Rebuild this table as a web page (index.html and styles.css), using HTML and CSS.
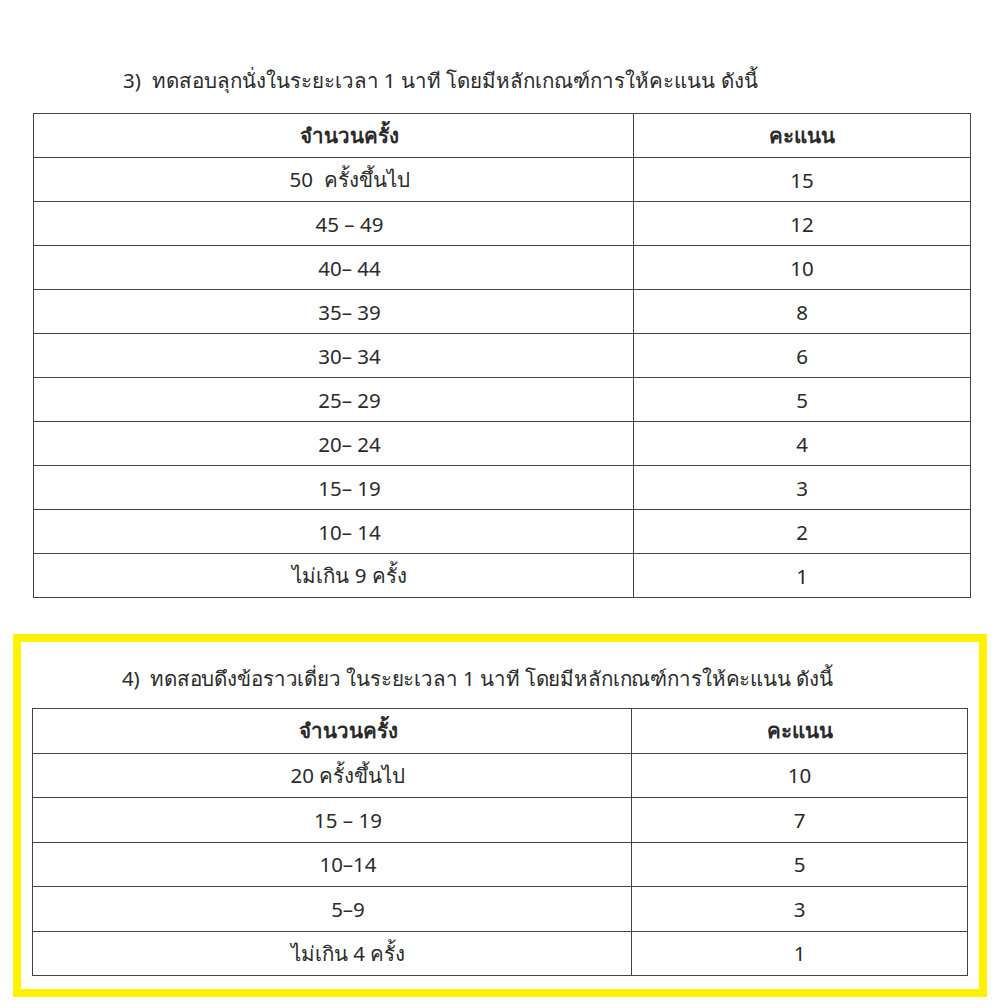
FILE: index.html
```html
<!DOCTYPE html>
<html lang="th">
<head>
<meta charset="utf-8">
<title>เกณฑ์การให้คะแนน</title>
<link rel="stylesheet" href="styles.css">
</head>
<body>
<div class="page">
  <section class="part part-plain">
    <p class="title">3)&nbsp; ทดสอบลุกนั่งในระยะเวลา 1 นาที โดยมีหลักเกณฑ์การให้คะแนน ดังนี้</p>
    <table class="score t1">
      <thead>
        <tr><th class="c-left">จำนวนครั้ง</th><th class="c-right">คะแนน</th></tr>
      </thead>
      <tbody>
        <tr><td class="c-left">50&nbsp; ครั้งขึ้นไป</td><td class="c-right">15</td></tr>
        <tr><td class="c-left">45 – 49</td><td class="c-right">12</td></tr>
        <tr><td class="c-left">40– 44</td><td class="c-right">10</td></tr>
        <tr><td class="c-left">35– 39</td><td class="c-right">8</td></tr>
        <tr><td class="c-left">30– 34</td><td class="c-right">6</td></tr>
        <tr><td class="c-left">25– 29</td><td class="c-right">5</td></tr>
        <tr><td class="c-left">20– 24</td><td class="c-right">4</td></tr>
        <tr><td class="c-left">15– 19</td><td class="c-right">3</td></tr>
        <tr><td class="c-left">10– 14</td><td class="c-right">2</td></tr>
        <tr><td class="c-left">ไม่เกิน 9 ครั้ง</td><td class="c-right">1</td></tr>
      </tbody>
    </table>
  </section>

  <section class="part part-highlight">
    <p class="title">4)&nbsp; ทดสอบดึงข้อราวเดี่ยว ในระยะเวลา 1 นาที โดยมีหลักเกณฑ์การให้คะแนน ดังนี้</p>
    <table class="score t2">
      <thead>
        <tr><th class="c-left">จำนวนครั้ง</th><th class="c-right">คะแนน</th></tr>
      </thead>
      <tbody>
        <tr><td class="c-left">20 ครั้งขึ้นไป</td><td class="c-right">10</td></tr>
        <tr><td class="c-left">15 – 19</td><td class="c-right">7</td></tr>
        <tr><td class="c-left">10–14</td><td class="c-right">5</td></tr>
        <tr><td class="c-left">5–9</td><td class="c-right">3</td></tr>
        <tr><td class="c-left">ไม่เกิน 4 ครั้ง</td><td class="c-right">1</td></tr>
      </tbody>
    </table>
  </section>
</div>
</body>
</html>
```

FILE: styles.css
```css
html, body {
  margin: 0;
  padding: 0;
  background: #ffffff;
}

body {
  font-family: "Noto Sans", "DejaVu Sans", sans-serif;
  color: #2a2a2a;
  font-size: 20.5px;
}

.page {
  width: 1000px;
  height: 1008px;
  overflow: hidden;
}

.title {
  margin: 0 0 0 90px;
  height: 30px;
  line-height: 30px;
  white-space: nowrap;
}

.part-plain {
  padding: 65px 29px 0 33px;
}

.part-plain .title {
  margin-bottom: 18px;
}

.part-highlight {
  box-sizing: border-box;
  margin: 36px 0 0 13px;
  width: 974px;
  border: 8px solid #fff200;
  padding: 21px 11px 13px 11px;
}

.part-highlight .title {
  margin-bottom: 15px;
  letter-spacing: -0.13px;
}

.score {
  width: 100%;
  border-collapse: collapse;
  table-layout: fixed;
}

.score th,
.score td {
  border: 1.5px solid #444444;
  padding: 0;
  text-align: center;
  vertical-align: middle;
  font-weight: normal;
  height: 43px;
}

.score th {
  font-weight: bold;
}

.t2 th,
.t2 td {
  height: 43.5px;
}

.score .c-left {
  width: 567px;
  padding-left: 32px;
}

.t2 .c-left {
  width: 566px;
}
```
